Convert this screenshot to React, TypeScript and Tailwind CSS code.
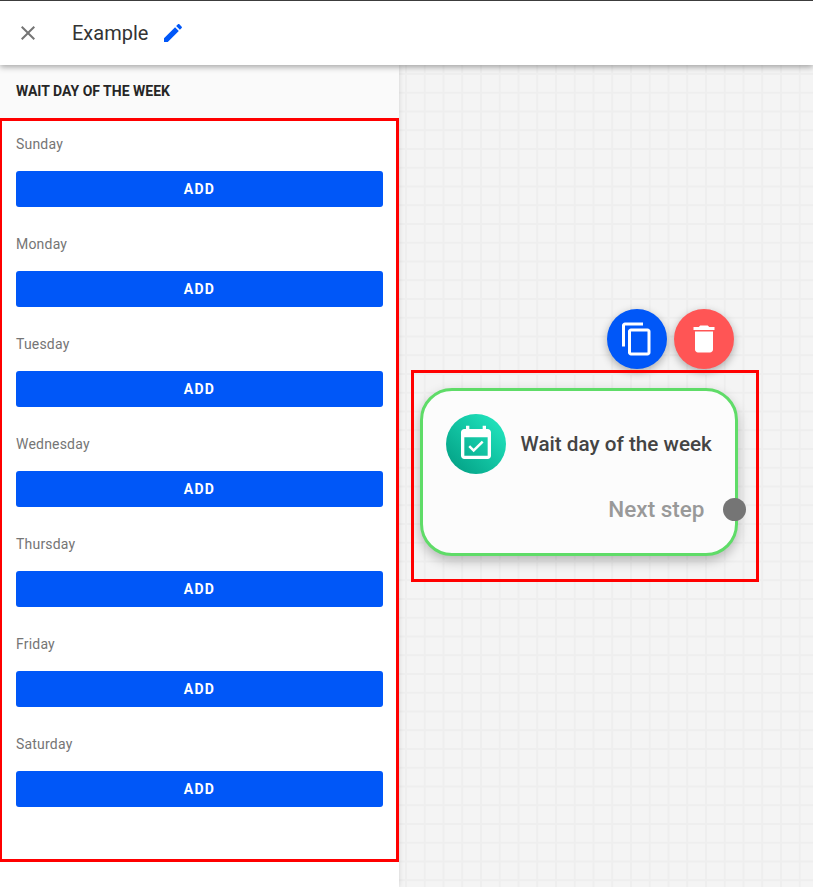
const days = ['Sunday', 'Monday', 'Tuesday', 'Wednesday', 'Thursday', 'Friday', 'Saturday'];

function Icon({ d, size, className }: { d: string; size: number; className?: string }) {
  return (
    <svg width={size} height={size} viewBox="0 0 24 24" fill="currentColor" className={className}>
      <path d={d} />
    </svg>
  );
}

const closePath = 'M19 6.41L17.59 5 12 10.59 6.41 5 5 6.41 10.59 12 5 17.59 6.41 19 12 13.41 17.59 19 19 17.59 13.41 12z';
const editPath =
  'M3 17.25V21h3.75L17.81 9.94l-3.75-3.75L3 17.25zM20.71 7.04c.39-.39.39-1.02 0-1.41l-2.34-2.34c-.39-.39-1.02-.39-1.41 0l-1.83 1.83 3.75 3.75 1.83-1.83z';
const copyPath =
  'M16 1H4c-1.1 0-2 .9-2 2v14h2V3h12V1zm3 4H8c-1.1 0-2 .9-2 2v14c0 1.1.9 2 2 2h11c1.1 0 2-.9 2-2V7c0-1.1-.9-2-2-2zm0 16H8V7h11v14z';
const deletePath = 'M6 19c0 1.1.9 2 2 2h8c1.1 0 2-.9 2-2V7H6v12zM19 4h-3.5l-1-1h-5l-1 1H5v2h14V4z';
const eventPath =
  'M16.53 11.06L15.47 10l-4.88 4.88-2.12-2.12-1.06 1.06L10.59 17l5.94-5.94zM19 3h-1V1h-2v2H8V1H6v2H5c-1.11 0-1.99.9-1.99 2L3 19c0 1.1.89 2 2 2h14c1.1 0 2-.9 2-2V5c0-1.1-.9-2-2-2zm0 16H5V8h14v11z';

export default function App() {
  return (
    <div className="relative flex h-[887px] w-[813px] flex-col overflow-hidden bg-white font-['Roboto',sans-serif]">
      <header className="relative z-20 flex h-[65px] shrink-0 items-center border-t border-[#3c3c3c] bg-white shadow-[0_2px_6px_rgba(0,0,0,0.35)]">
        <Icon d={closePath} size={24} className="ml-4 text-[#757575]" />
        <span className="ml-8 text-xl text-[#333333]">Example</span>
        <Icon d={editPath} size={24} className="ml-[13px] text-[#0057f8]" />
      </header>

      <div className="flex min-h-0 flex-1">
        <aside className="relative z-10 flex w-[399px] shrink-0 flex-col bg-white shadow-[0_0_5px_rgba(0,0,0,0.15)]">
          <h2 className="flex h-[53px] shrink-0 items-center bg-[#fafafa] px-4 pb-[1px] text-sm font-bold uppercase text-[#262626]">
            Wait day of the week
          </h2>
          <div className="flex flex-col px-4 pt-px">
            {days.map((day) => (
              <div key={day} className="flex h-[100px] flex-col pt-[15px]">
                <span className="text-sm leading-5 tracking-[0.2px] text-[#757575]">{day}</span>
                <button className="mt-[17px] h-9 w-[367px] rounded-[3px] bg-[#0057f8] text-sm font-bold tracking-[1.25px] text-white">
                  ADD
                </button>
              </div>
            ))}
          </div>
        </aside>

        <main className="relative flex-1 bg-[#f4f4f4] bg-[linear-gradient(to_right,#eeeeee_1.5px,transparent_1.5px),linear-gradient(to_bottom,#eeeeee_1.5px,transparent_1.5px)] bg-[size:18.75px_18.75px] bg-[position:6px_8px]">
          <button className="absolute left-[208px] top-[244px] flex h-[60px] w-[60px] items-center justify-center rounded-full bg-[#0057f8] text-white shadow-[0_3px_8px_rgba(0,0,0,0.3)]">
            <Icon d={copyPath} size={36} />
          </button>
          <button className="absolute left-[275px] top-[244px] flex h-[60px] w-[60px] items-center justify-center rounded-full bg-[#ff5555] text-white shadow-[0_3px_8px_rgba(0,0,0,0.3)]">
            <Icon d={deletePath} size={36} />
          </button>

          <div className="absolute left-[21px] top-[323px] h-[168px] w-[318px] rounded-[32px] border-[3.5px] border-[#5fdc68] bg-[#fcfcfc] shadow-[0_5px_12px_rgba(0,0,0,0.25)]">
            <div className="ml-[22.5px] mt-[22.5px] flex items-center">
              <div className="flex h-[60px] w-[60px] items-center justify-center rounded-full bg-[linear-gradient(to_top_right,#009a80,#24ecc4)] text-white">
                <Icon d={eventPath} size={40} />
              </div>
              <span className="ml-[15px] pt-[2px] text-[20.7px] font-medium text-[#444444]">Wait day of the week</span>
            </div>
            <div className="absolute right-[30.5px] top-[104px] text-[22.5px] font-medium leading-7 text-[#999999]">Next step</div>
          </div>
          <div className="absolute left-[324px] top-[433px] h-[23px] w-[23px] rounded-full bg-[#757575]" />
        </main>
      </div>

      {/* red annotation boxes on top of the shot */}
      <div className="absolute -left-px top-[118px] z-30 h-[744px] w-[400px] border-[3px] border-[#ff0000]" />
      <div className="absolute left-[411px] top-[370px] z-30 h-[212px] w-[348px] border-[3px] border-[#ff0000]" />
    </div>
  );
}
